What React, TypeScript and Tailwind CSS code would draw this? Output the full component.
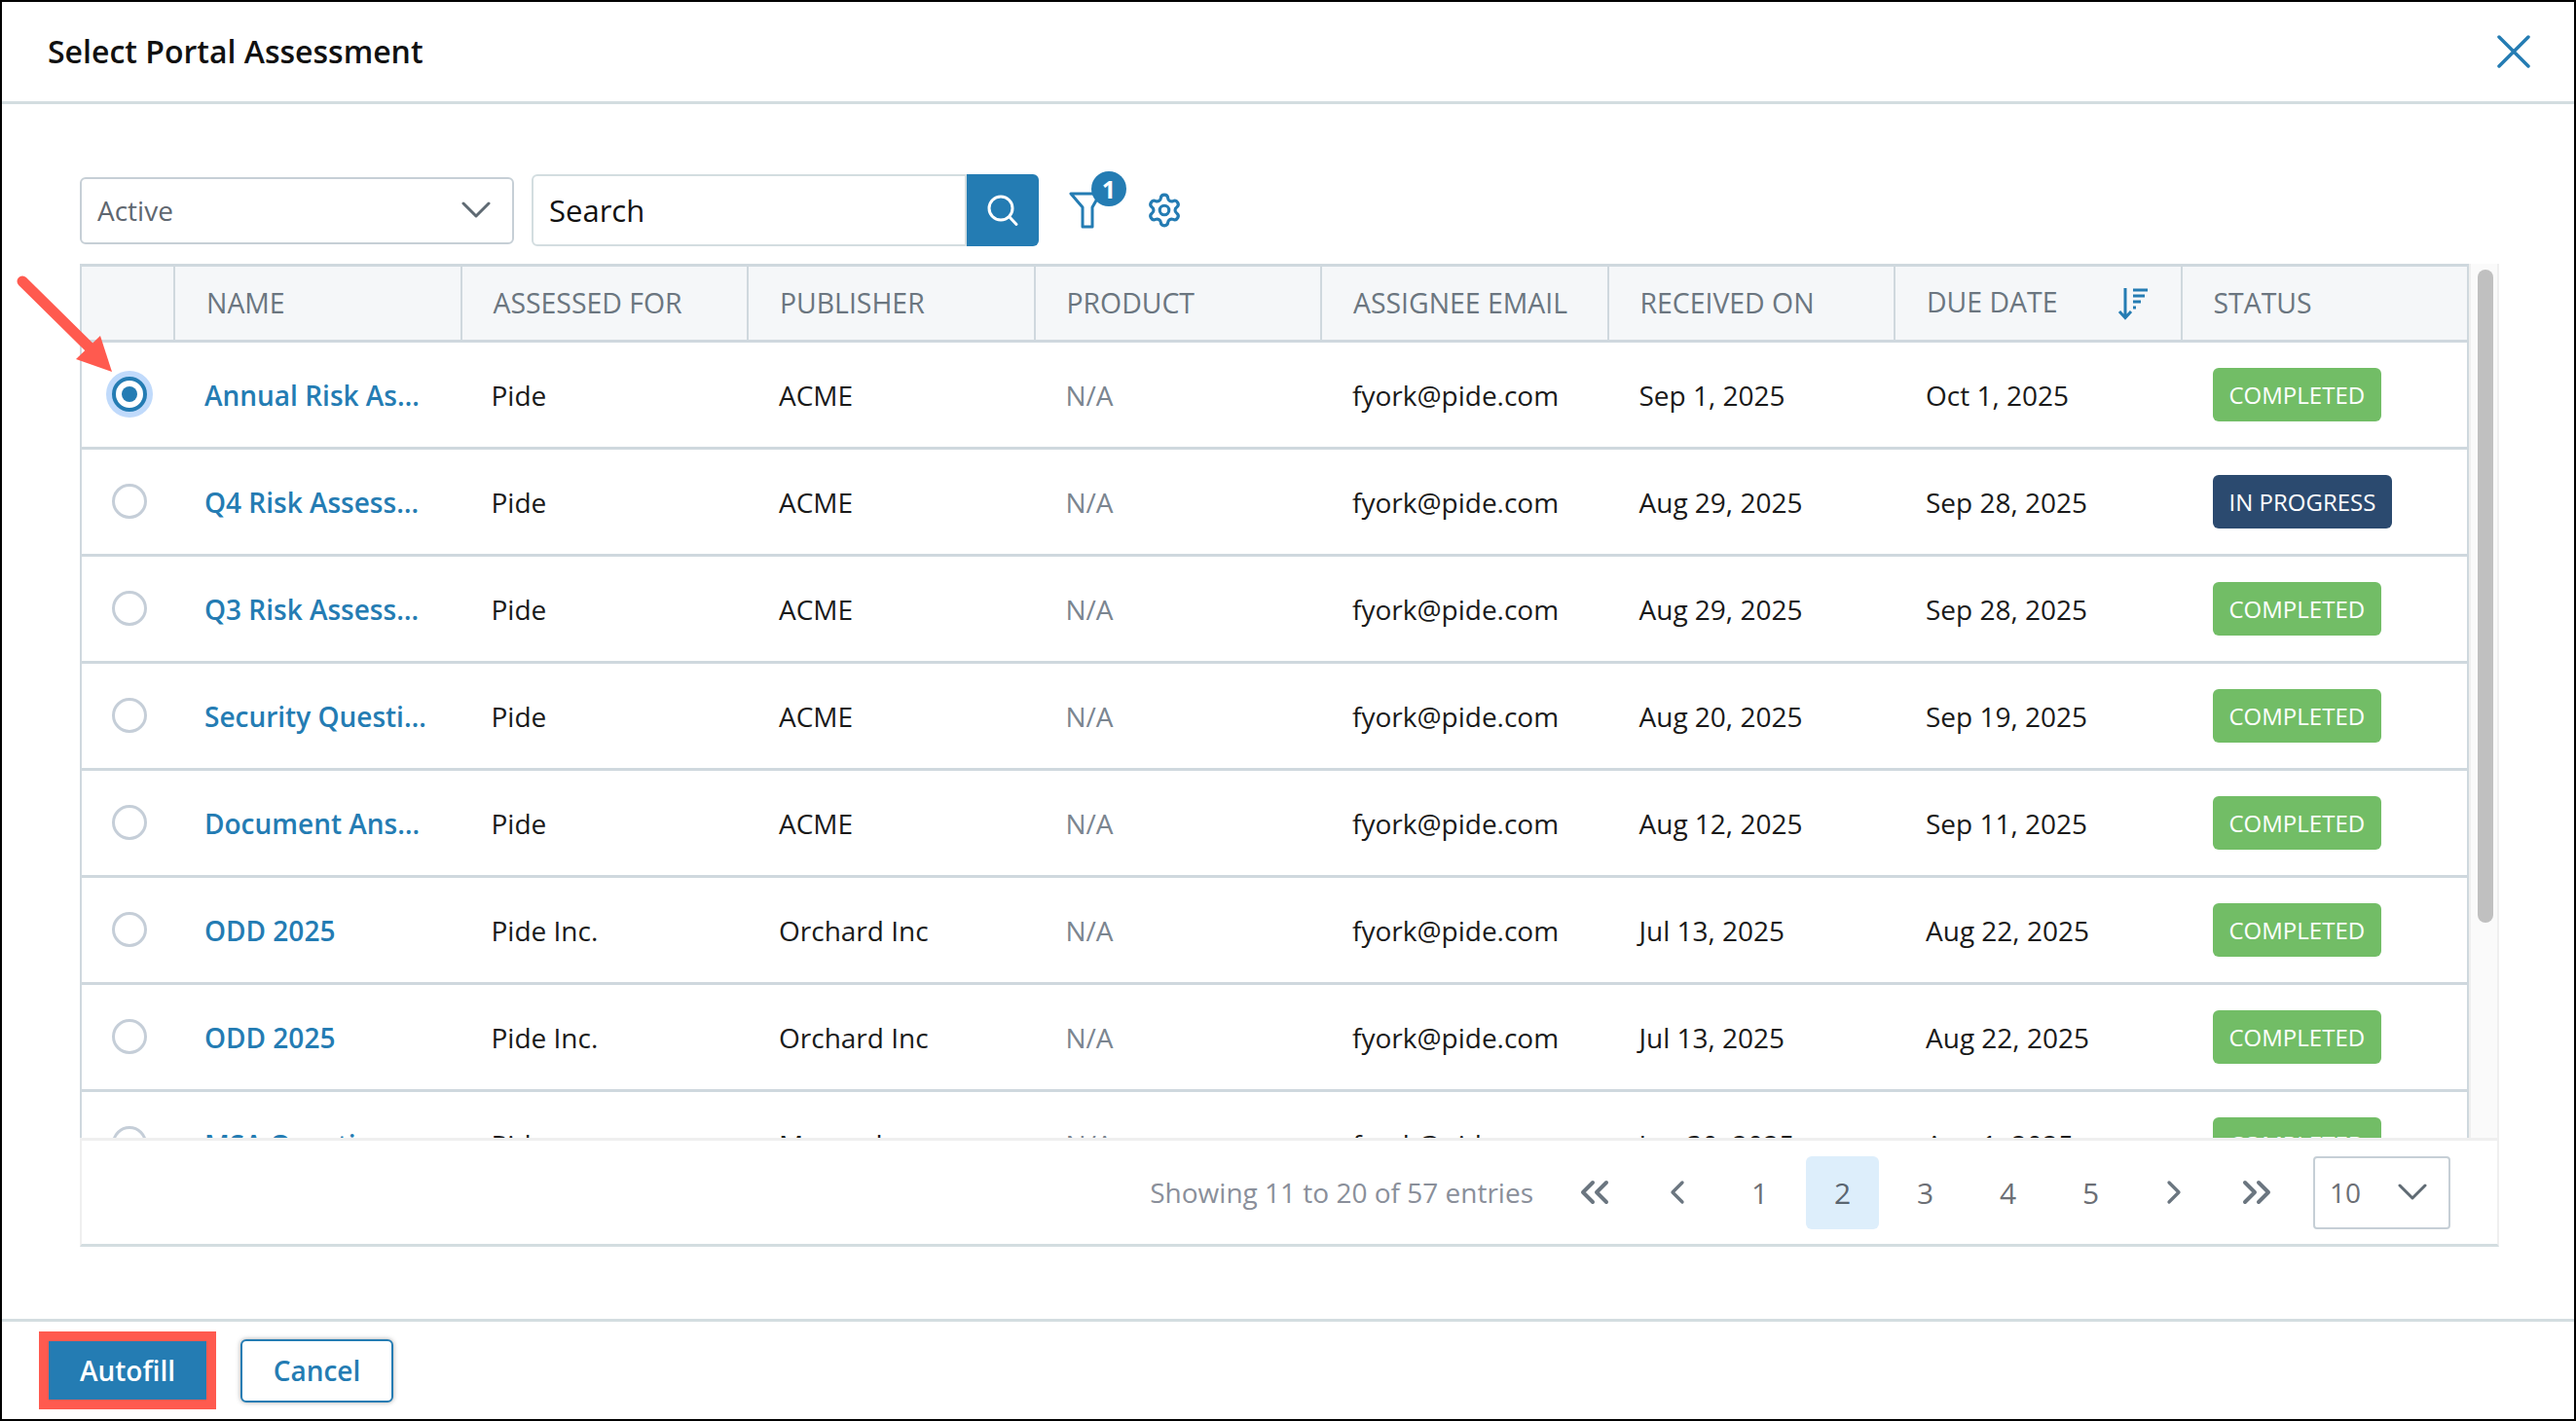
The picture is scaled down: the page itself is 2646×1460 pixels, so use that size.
// App.tsx
import { ChevronLeft, ChevronRight, ChevronsLeft, ChevronsRight, Settings } from "lucide-react";

type Row = {
  name: string;
  assessedFor: string;
  publisher: string;
  received: string;
  due: string;
  status: "COMPLETED" | "IN PROGRESS";
};

const ROWS: Row[] = [
  { name: "Annual Risk Assessment", assessedFor: "Pide", publisher: "ACME", received: "Sep 1, 2025", due: "Oct 1, 2025", status: "COMPLETED" },
  { name: "Q4 Risk Assessment", assessedFor: "Pide", publisher: "ACME", received: "Aug 29, 2025", due: "Sep 28, 2025", status: "IN PROGRESS" },
  { name: "Q3 Risk Assessment", assessedFor: "Pide", publisher: "ACME", received: "Aug 29, 2025", due: "Sep 28, 2025", status: "COMPLETED" },
  { name: "Security Questionnaire", assessedFor: "Pide", publisher: "ACME", received: "Aug 20, 2025", due: "Sep 19, 2025", status: "COMPLETED" },
  { name: "Document Answers", assessedFor: "Pide", publisher: "ACME", received: "Aug 12, 2025", due: "Sep 11, 2025", status: "COMPLETED" },
  { name: "ODD 2025", assessedFor: "Pide Inc.", publisher: "Orchard Inc", received: "Jul 13, 2025", due: "Aug 22, 2025", status: "COMPLETED" },
  { name: "ODD 2025", assessedFor: "Pide Inc.", publisher: "Orchard Inc", received: "Jul 13, 2025", due: "Aug 22, 2025", status: "COMPLETED" },
  { name: "MSA Questionnaire", assessedFor: "Pide", publisher: "Monarch", received: "Jun 30, 2025", due: "Aug 1, 2025", status: "COMPLETED" },
];

const HEADERS = ["NAME", "ASSESSED FOR", "PUBLISHER", "PRODUCT", "ASSIGNEE EMAIL", "RECEIVED ON", "DUE DATE", "STATUS"];

const Chevron = () => (
  <svg width="30" height="18" viewBox="0 0 30 18" fill="none" stroke="#5f6a73" strokeWidth="3" strokeLinecap="round" strokeLinejoin="round">
    <path d="M2 2 15 15 28 2" />
  </svg>
);

const SortIcon = () => (
  <svg width="32" height="34" viewBox="0 0 32 34" fill="none" stroke="#247cb3" strokeWidth="3">
    <path d="M8 1v30M2 25l6 6.500 6-6.500" />
    <path d="M16 3h15M16 9h12M16 15h8M16 21h3" />
  </svg>
);

const FilterIcon = () => (
  <svg width="40" height="42" viewBox="0 0 40 42" fill="none" stroke="#247cb3" strokeWidth="3" strokeLinejoin="round" className="block">
    <path d="M2 5h30L24 19v20H14V19z" />
  </svg>
);

const SearchIcon = () => (
  <svg width="34" height="34" viewBox="0 0 34 34" fill="none" stroke="#ffffff" strokeWidth="3" strokeLinecap="round">
    <circle cx="15" cy="15" r="12" />
    <path d="M24 24l7 7.500" />
  </svg>
);

const CloseIcon = () => (
  <svg width="34" height="34" viewBox="0 0 34 34" fill="none" stroke="#247cb3" strokeWidth="3.500" strokeLinecap="round">
    <path d="M2 2l30 30M32 2 2 32" />
  </svg>
);

const Radio = ({ checked }: { checked: boolean }) =>
  checked ? (
    <span className="flex h-[48px] w-[48px] items-center justify-center rounded-full bg-[#c0dafb]">
      <span className="flex h-[36px] w-[36px] items-center justify-center rounded-full border-[4px] border-[#247cb3] bg-white">
        <span className="h-[16px] w-[16px] rounded-full bg-[#247cb3]" />
      </span>
    </span>
  ) : (
    <span className="h-[36px] w-[36px] rounded-full border-[3px] border-[#c5ced8] bg-white" />
  );

const StatusBadge = ({ status }: { status: Row["status"] }) => (
  <span
    className={
      status === "COMPLETED"
        ? "flex h-[55px] items-center rounded-[6px] bg-[#72bd66] px-[17px] text-[24px] font-medium text-white"
        : "flex h-[55px] items-center rounded-[6px] bg-[#2b4a6f] px-[17px] text-[24px] font-medium text-white"
    }
  >
    {status}
  </span>
);

const PAGE_BTN = "flex h-[75px] w-[85px] items-center justify-center";

export default function App() {
  return (
    <div className="relative flex h-[1460px] w-[2646px] flex-col overflow-hidden border-2 border-black bg-white font-['Open_Sans',sans-serif] text-[28px] text-[#1a1a1a]">
      {/* header */}
      <div className="flex h-[105px] shrink-0 items-center justify-between border-b-[3px] border-[#d3dde0] pl-[47px] pr-[45px]">
        <h1 className="text-[32px] font-semibold text-[#111]">Select Portal Assessment</h1>
        <CloseIcon />
      </div>

      <div className="flex min-h-0 flex-1 flex-col pl-[80px] pt-[72px]">
        {/* toolbar */}
        <div className="flex h-[74px] shrink-0 items-center">
          <div className="flex h-[69px] w-[446px] items-center justify-between rounded-[6px] border-[2px] border-[#c6cfd6] pl-[16px] pr-[22px] text-[#5f6770]">
            Active
            <Chevron />
          </div>
          <div className="ml-[18px] flex h-[74px] w-[447px] items-center rounded-l-[6px] border-[2px] border-[#d3dde0] pl-[16px] text-[31px] text-[#111]">
            Search
          </div>
          <button className="flex h-[74px] w-[74px] items-center justify-center rounded-r-[6px] bg-[#247cb3]">
            <SearchIcon />
          </button>
          <div className="relative ml-[31px] h-[50px] w-[50px]">
            <div className="absolute left-0 top-[3px]">
              <FilterIcon />
            </div>
            <span className="absolute left-[23px] top-[-15px] flex h-[36px] w-[36px] items-center justify-center rounded-full bg-[#247cb3] text-[25px] font-bold leading-none text-white">
              1
            </span>
          </div>
          <div className="ml-[29px] text-[#247cb3]">
            <Settings size={38} strokeWidth={2} className="block" />
          </div>
        </div>

        {/* table */}
        <div className="mt-[18px] w-[2485px]">
          <div className="flex h-[898px]">
            <div className="h-full w-[2454px] overflow-hidden border-x-[2px] border-t-[3px] border-x-[#cfd8de] border-t-[#cfd8de]">
              <div className="grid h-[78px] grid-cols-[94px_repeat(8,minmax(0,1fr))] border-b-[3px] border-[#cfd8de] bg-[#f5f7f9] text-[28.400px] font-medium text-[#6b7680]">
                <div />
                {HEADERS.map((h) => (
                  <div key={h} className="flex items-center justify-between border-l-[2px] border-[#cfd8de] pl-[32px] pr-[33px]">
                    <span className={h === "DUE DATE" ? "-mt-[3px]" : ""}>{h}</span>
                    {h === "DUE DATE" && <SortIcon />}
                  </div>
                ))}
              </div>
              {ROWS.map((r, i) => (
                <div key={i} className="grid h-[110px] grid-cols-[94px_repeat(8,minmax(0,1fr))] items-center border-b-[3px] border-[#cfd8de]">
                  <div className="-mt-[2px] flex items-center justify-center pl-[4px]">
                    <Radio checked={i === 0} />
                  </div>
                  <div className="pl-[32px] pr-[30px] pt-[1px]">
                    <span className="block truncate font-semibold text-[#247cb3]">{r.name}</span>
                  </div>
                  <div className="pl-[32px] pt-[1px]">{r.assessedFor}</div>
                  <div className="pl-[33px] pt-[1px]">{r.publisher}</div>
                  <div className="pl-[33px] pt-[1px] text-[#7b8590]">N/A</div>
                  <div className="pl-[33px] pt-[1px]">fyork@pide.com</div>
                  <div className="pl-[33px] pt-[1px]">{r.received}</div>
                  <div className="pl-[33px] pt-[1px]">{r.due}</div>
                  <div className="flex pl-[33px]">
                    <StatusBadge status={r.status} />
                  </div>
                </div>
              ))}
            </div>
            {/* scrollbar */}
            <div className="h-full w-[31px] border-x-[2px] border-[#efefef] bg-[#fafafa] pl-[7px] pt-[6px]">
              <div className="h-[671px] w-[16px] rounded-full bg-[#c0c0c0]" />
            </div>
          </div>

          {/* pagination */}
          <div className="flex h-[112px] items-center justify-end border-x-[2px] border-b-[3px] border-t-[3px] border-x-[#efefef] border-b-[#d3dde0] border-t-[#efefef] pr-[48px] text-[#6c6f75]">
            <span className="mr-[20px] text-[#8a8f9a]">Showing 11 to 20 of 57 entries</span>
            <div className={PAGE_BTN}><ChevronsLeft size={48} strokeWidth={2} className="text-[#6b7680]" /></div>
            <div className={PAGE_BTN}><ChevronLeft size={40} strokeWidth={2} className="text-[#6b7680]" /></div>
            {[1, 2, 3, 4, 5].map((p) => (
              <div
                key={p}
                className={
                  p === 2
                    ? "mx-[5px] flex h-[75px] w-[75px] items-center justify-center rounded-[6px] bg-[#ddeefb] text-[30px] text-[#5a6570]"
                    : "flex h-[75px] w-[85px] items-center justify-center text-[30px]"
                }
              >
                {p}
              </div>
            ))}
            <div className={PAGE_BTN}><ChevronRight size={40} strokeWidth={2} className="text-[#6b7680]" /></div>
            <div className={PAGE_BTN}><ChevronsRight size={48} strokeWidth={2} className="text-[#6b7680]" /></div>
            <div className="ml-[16px] flex h-[75px] w-[141px] items-center justify-between rounded-[4px] border-[2px] border-[#c6cfd6] pl-[15px] pr-[22px] text-[#6c6f75]">
              10
              <Chevron />
            </div>
          </div>
        </div>
      </div>

      {/* footer */}
      <div className="flex h-[103px] shrink-0 items-center border-t-[3px] border-[#d3dde0] pl-[38px]">
        <div className="border-[10px] border-[#ff5a4f]">
          <button className="flex h-[60px] w-[162px] items-center justify-center bg-[#247cb3] text-[28px] font-semibold text-white">
            Autofill
          </button>
        </div>
        <button className="ml-[25px] flex h-[65px] w-[157px] items-center justify-center rounded-[6px] border-[2px] border-[#247cb3] bg-white text-[28px] font-semibold text-[#247cb3] shadow-[0_0_5px_rgba(0,0,0,0.35)]">
          Cancel
        </button>
      </div>

      {/* red annotation arrow */}
      <svg className="absolute left-[-2px] top-[-2px]" width="140" height="400" viewBox="0 0 140 400" fill="#ff5a4f">
        <path d="M23 289 96 361" stroke="#ff5a4f" strokeWidth="11" strokeLinecap="round" fill="none" />
        <path d="M115 382 103 345 78 369z" />
      </svg>
    </div>
  );
}
